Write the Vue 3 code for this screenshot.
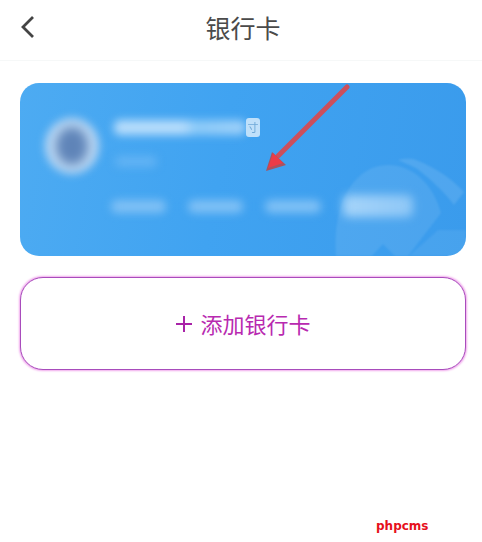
<script setup>
const pills = [
  { w: 55, big: false },
  { w: 55, big: false },
  { w: 56, big: false },
  { w: 70, big: true }
]
</script>

<template>
  <div class="page">
    <header class="nav">
      <svg class="back" width="18" height="26" viewBox="0 0 18 26" fill="none">
        <path d="M14 3 L4 13 L14 23" stroke="#444" stroke-width="2.8" />
      </svg>
      <h1 class="title">银行卡</h1>
    </header>

    <main class="content">
      <section class="card">
        <svg class="deco" width="140" height="110" viewBox="0 0 140 110" fill="none">
          <path d="M10 110 C6 58 28 19 62 19 C88 19 108 40 115 67 L82 110 L69 110 L57 98 L46 110 Z" fill="#fff" opacity=".09" />
          <path d="M72 14 C80 12 88 13 90 14 C110 22 125 32 138 46 L128 59 C118 46 108 36 90 22 Z" fill="#fff" opacity=".11" />
          <path d="M83 110 L112 84 L140 84 L140 110 Z" fill="#fff" opacity=".07" />
        </svg>
        <div class="holder">
          <div class="avatar"><span class="avatar-core"></span></div>
          <div class="info">
            <div class="name-row">
              <span class="name"></span>
              <span class="tag">寸</span>
            </div>
            <span class="sub"></span>
          </div>
        </div>
        <div class="pills">
          <span
            v-for="(p, i) in pills"
            :key="i"
            class="pill"
            :class="{ big: p.big }"
            :style="{ width: p.w + 'px' }"
          ></span>
        </div>
        <svg class="arrow" width="100" height="100" viewBox="0 0 100 100" fill="none">
          <path d="M83 3 L14 72" stroke="#cc4f5c" stroke-width="5" stroke-linecap="round" />
          <path d="M2 87 L8 68 L22 81 Z" fill="#a9525f" />
          <path d="M4 84 L9 69 L19 79 Z" fill="#ec3b47" />
        </svg>
      </section>

      <button class="add" type="button">
        <svg width="18" height="18" viewBox="0 0 18 18" fill="none">
          <path d="M9 1 V17 M1 9 H17" stroke="#a923a8" stroke-width="2" />
        </svg>
        <span class="add-label">添加银行卡</span>
      </button>
    </main>

    <footer class="mark">phpcms</footer>
  </div>
</template>

<style scoped>
.page {
  width: 482px;
  height: 542px;
  display: flex;
  flex-direction: column;
  background: #fff;
  overflow: hidden;
  font-family: "Noto Sans CJK SC", "Noto Sans", sans-serif;
}
.nav {
  position: relative;
  height: 61px;
  flex: none;
  display: flex;
  align-items: center;
  justify-content: center;
  padding-bottom: 6px;
  box-sizing: border-box;
  border-bottom: 1px solid #f6f8f8;
}
.back {
  position: absolute;
  left: 19px;
  top: 14px;
}
.title {
  margin: 0 0 0 4px;
  font-size: 25px;
  font-weight: 400;
  line-height: 32px;
  color: #4a4a4a;
}
.content {
  flex: 1;
  display: flex;
  flex-direction: column;
  gap: 21px;
  padding: 22px 16px 0 20px;
}
.card {
  position: relative;
  height: 173px;
  border-radius: 19px;
  overflow: hidden;
  background: linear-gradient(100deg, #4dabf2 0%, #40a3f1 45%, #3a9bec 100%);
  padding: 33px 0 0 25px;
  box-sizing: border-box;
}
.deco {
  position: absolute;
  right: 0;
  bottom: 0;
  filter: blur(1px);
}
.arrow {
  position: absolute;
  left: 244px;
  top: 1px;
  filter: blur(0.5px);
}
.holder {
  display: flex;
  gap: 13px;
}
.avatar {
  width: 54px;
  height: 56px;
  margin: 2px 2px 0 0;
  border-radius: 50%;
  background: #bcd8f3;
  filter: blur(4px);
  display: flex;
  align-items: center;
  justify-content: center;
  flex: none;
}
.avatar-core {
  width: 32px;
  height: 38px;
  border-radius: 50%;
  background: #5f84b8;
  filter: blur(3px);
}
.info {
  display: flex;
  flex-direction: column;
  gap: 20px;
  padding-top: 2px;
}
.name-row {
  display: flex;
  align-items: center;
  height: 18px;
}
.name {
  width: 132px;
  height: 15px;
  border-radius: 6px;
  background: linear-gradient(90deg, #b6dcfb 0%, #b6dcfb 52%, #8ccaf8 62%, #9ed0f9 100%);
  filter: blur(4px);
}
.tag {
  width: 14px;
  height: 19px;
  border-radius: 3px;
  background: #bfe0fa;
  color: #6fa9d8;
  font-size: 11px;
  line-height: 19px;
  text-align: center;
  filter: blur(0.5px);
}
.sub {
  width: 42px;
  height: 11px;
  margin-left: 1px;
  border-radius: 5px;
  background: #62b3f4;
  filter: blur(4px);
}
.pills {
  display: flex;
  align-items: center;
  gap: 22px;
  margin: 21px 0 0 66px;
}
.pill {
  height: 13px;
  border-radius: 6px;
  background: #7fc0f5;
  filter: blur(4px);
}
.pill.big {
  height: 22px;
  background: linear-gradient(90deg, #a6d4f9, #8ec7f6);
  filter: blur(5px);
}
.add {
  height: 93px;
  border: 1.5px solid #a84cbc;
  border-radius: 23px;
  background: #fff;
  box-shadow: 0 0 2px 0.5px #f0a8ec;
  display: flex;
  align-items: center;
  justify-content: center;
  gap: 7px;
  padding: 0;
  color: #b82ab0;
  font-family: inherit;
  font-size: 22px;
  line-height: 30px;
}
.add-label {
  margin-top: -2px;
}
.mark {
  position: absolute;
  left: 376px;
  top: 517px;
  color: #e6101c;
  font-family: "DejaVu Sans", sans-serif;
  font-weight: 700;
  font-size: 12px;
  line-height: 18px;
}
</style>
